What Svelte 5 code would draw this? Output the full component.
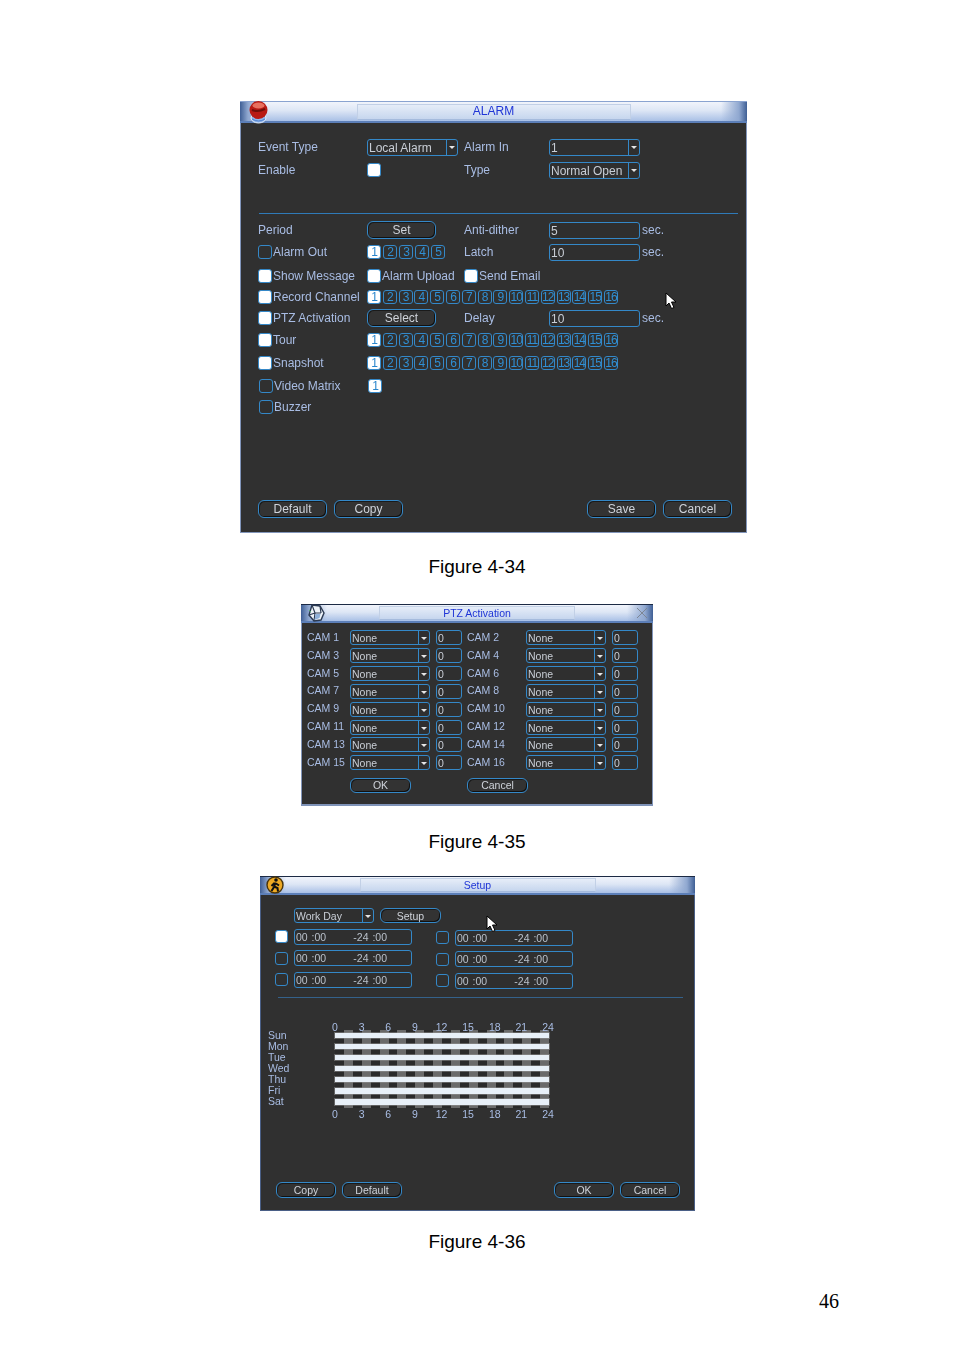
<script>
  const upTo = (n) => Array.from({ length: n }, (_, i) => i + 1)
  const camRows = upTo(8).map((i) => [i * 2 - 1, i * 2])
  const hours = [0, 3, 6, 9, 12, 15, 18, 21, 24]
  const days = ['Sun', 'Mon', 'Tue', 'Wed', 'Thu', 'Fri', 'Sat']
</script>

{#snippet title(text)}
  <div class="plate">{text}</div>
{/snippet}

{#snippet select(text)}
  <div class="field select"><span class="val">{text}</span><span class="drop"></span></div>
{/snippet}

{#snippet check(text, on = false)}
  <div class="check-wrap">
    <span class="box" class:on></span>{#if text}<span>{text}</span>{/if}
  </div>
{/snippet}

{#snippet chips(n, wide = false)}
  <div class="chips" class:wide>
    {#each upTo(n) as i}
      <span class="chip" class:on={i === 1}>{i}</span>
    {/each}
  </div>
{/snippet}

{#snippet time()}
  <div class="field time"><span>00 :00</span><span>-24 :00</span></div>
{/snippet}

{#snippet cursor()}
  <svg class="cursor" width="12" height="18" viewBox="0 0 12 18">
    <path d="M1 1v13l3-3 2.500 5.500 2.500-1L6.500 10H11z" fill="#fff" stroke="#000" stroke-width="1" />
  </svg>
{/snippet}

<div class="page">
  <section class="dialog alarm">
    <header class="titlebar">
      <svg class="icon ball" width="22" height="24" viewBox="0 0 22 24">
        <ellipse cx="10.500" cy="17" rx="7.500" ry="5" fill="#8fb6ec" stroke="#e6effb" />
        <path d="M4 18q6.500 4 13 0" fill="none" stroke="#4f80cc" />
        <circle cx="10.500" cy="9" r="9" fill="#b81a14" />
        <ellipse cx="10.500" cy="4.500" rx="6" ry="3" fill="#e8705f" />
        <path d="M4 9q6 2.500 13-1" fill="none" stroke="#6e0f0a" stroke-width="2" />
      </svg>
      {@render title('ALARM')}
    </header>
    <div class="alarm-body">
      <div class="row">
        <span>Event Type</span>
        {@render select('Local Alarm')}
        <span>Alarm In</span>
        {@render select('1')}
      </div>
      <div class="row step3">
        <span>Enable</span>
        {@render check('', true)}
        <span>Type</span>
        {@render select('Normal Open')}
      </div>
      <div class="rule"></div>
      <div class="row">
        <span>Period</span>
        <button class="btn">Set</button>
        <span>Anti-dither</span>
        <div class="field"><span class="val">5</span></div>
        <span class="unit">sec.</span>
      </div>
      <div class="row step2">
        {@render check('Alarm Out')}
        {@render chips(5)}
        <span>Latch</span>
        <div class="field"><span class="val">10</span></div>
        <span class="unit">sec.</span>
      </div>
      <div class="row step4">
        {@render check('Show Message', true)}
        {@render check('Alarm Upload', true)}
        {@render check('Send Email', true)}
      </div>
      <div class="row step1">
        {@render check('Record Channel', true)}
        {@render chips(16, true)}
      </div>
      <div class="row step1">
        {@render check('PTZ Activation', true)}
        <button class="btn">Select</button>
        <span>Delay</span>
        <div class="field"><span class="val">10</span></div>
        <span class="unit">sec.</span>
      </div>
      <div class="row step2">
        {@render check('Tour', true)}
        {@render chips(16, true)}
      </div>
      <div class="row step3">
        {@render check('Snapshot', true)}
        {@render chips(16, true)}
      </div>
      <div class="row step3 nudge">
        {@render check('Video Matrix')}
        {@render chips(1)}
      </div>
      <div class="row step1 nudge">
        {@render check('Buzzer')}
      </div>
      <div class="actions">
        <button class="btn">Default</button>
        <button class="btn">Copy</button>
        <button class="btn push">Save</button>
        <button class="btn">Cancel</button>
      </div>
    </div>
    {@render cursor()}
  </section>
  <p class="caption">Figure 4-34</p>

  <section class="dialog ptz">
    <header class="titlebar small">
      <svg class="icon globe" width="20" height="18" viewBox="0 0 20 18">
        <path d="M6 1l8 1 4 7-3 7-7 1-5-6z" fill="#eef3f8" stroke="#2c3a52" stroke-width="1.400" />
        <path d="M6 1l3 8 6 0M9 9l-1 8M9 9l-6 2M14 2l1 7" fill="none" stroke="#2c3a52" stroke-width="1.200" />
        <path d="M9.500 10l5 0-1 4-5 2z" fill="#8fb0d8" />
        <path d="M3 6l2 2" stroke="#58b070" />
      </svg>
      {@render title('PTZ Activation')}
      <svg class="icon close" width="12" height="12" viewBox="0 0 12 12">
        <path d="M1 1l10 10M11 1L1 11" stroke="#7d8694" fill="none" />
      </svg>
    </header>
    <div class="ptz-body">
      {#each camRows as [a, b]}
        <div class="cam-row">
          <span>CAM {a}</span>
          {@render select('None')}
          <div class="field"><span class="val">0</span></div>
          <span>CAM {b}</span>
          {@render select('None')}
          <div class="field"><span class="val">0</span></div>
        </div>
      {/each}
      <div class="cam-actions">
        <button class="btn">OK</button>
        <button class="btn">Cancel</button>
      </div>
    </div>
  </section>
  <p class="caption second">Figure 4-35</p>

  <section class="dialog setup">
    <header class="titlebar small">
      <svg class="icon walker" width="18" height="18" viewBox="0 0 18 18">
        <circle cx="9" cy="9" r="8" fill="#eeaa24" stroke="#4a3408" stroke-width="1.400" />
        <circle cx="10" cy="4" r="1.800" fill="#111" />
        <path d="M9.500 6.500L8 11l-2.500 4M8 10.500l3.500 1.500.5 3.500M8.500 7L5.500 10M10 7.500l3 2" fill="none" stroke="#111" stroke-width="2" />
      </svg>
      {@render title('Setup')}
    </header>
    <div class="setup-body">
      <div class="setup-top">
        <div class="narrow">{@render select('Work Day')}</div>
        <button class="btn">Setup</button>
      </div>
      <div class="periods">
        {@render check('', true)}
        {@render time()}
        {@render check('')}
        {@render time()}
        {@render check('')}
        {@render time()}
        {@render check('')}
        {@render time()}
        {@render check('')}
        {@render time()}
        {@render check('')}
        {@render time()}
      </div>
      <div class="rule setup-rule"></div>
      <div class="chart">
        <div class="days">
          {#each days as d}<span>{d}</span>{/each}
        </div>
        <div class="plot">
          <div class="hours top">{#each hours as h}<span>{h}</span>{/each}</div>
          <div class="bars">{#each days as d}<i></i>{/each}</div>
          <div class="hours">{#each hours as h}<span>{h}</span>{/each}</div>
        </div>
      </div>
      <div class="setup-actions">
        <button class="btn">Copy</button>
        <button class="btn">Default</button>
        <button class="btn push">OK</button>
        <button class="btn">Cancel</button>
      </div>
    </div>
    {@render cursor()}
  </section>
  <p class="caption third">Figure 4-36</p>

  <footer class="folio">46</footer>
</div>

<style>
  :global(body) {
    background: #fff;
  }

  .page {
    width: 954px;
    height: 1350px;
    padding-top: 101px;
    box-sizing: border-box;
    overflow: hidden;
    font-family: 'Liberation Sans', Arial, sans-serif;
  }

  .caption {
    margin: 23px 0 26px;
    width: 954px;
    text-align: center;
    font-size: 19px;
    line-height: 22px;
    color: #000;
  }

  .caption.second {
    margin: 25px 0 23px;
  }

  .caption.third {
    margin: 20px 0 0;
  }

  .folio {
    margin: 37px 115px 0 0;
    text-align: right;
    font-family: 'Liberation Serif', 'Times New Roman', serif;
    font-size: 20px;
    line-height: 22px;
    color: #000;
  }

  .dialog {
    position: relative;
    box-sizing: border-box;
    background: #303030;
    border: 1px solid #8296bb;
    border-top: 0;
    color: #a9bde4;
    font-size: 12px;
    filter: blur(0.3px);
  }

  .alarm {
    width: 507px;
    height: 432px;
    margin-left: 240px;
  }

  .ptz {
    width: 352px;
    height: 202px;
    margin-left: 301px;
    border-bottom: 2px solid #7f93b8;
    font-size: 10.500px;
  }

  .setup {
    width: 435px;
    height: 335px;
    margin-left: 260px;
    border-color: #4a5f86;
    font-size: 10.500px;
  }

  .titlebar {
    position: relative;
    height: 22px;
    margin: 0 -1px;
    display: flex;
    align-items: center;
    justify-content: center;
    box-sizing: border-box;
    border-top: 1px solid #8aa3d0;
    border-bottom: 2px solid #5c7fb8;
    background:
      linear-gradient(90deg, #3f5f95 0, #90a8d0 8px, rgba(255, 255, 255, 0) 26px, rgba(255, 255, 255, 0) calc(100% - 26px), #90a8d0 calc(100% - 8px), #3f5f95 100%),
      linear-gradient(180deg, #f1f4fb 0, #dde6f5 45%, #a9c0e6 100%);
  }

  .titlebar.small {
    height: 19px;
    border-top-color: #1c2a44;
  }

  .plate {
    box-sizing: border-box;
    width: 274px;
    height: 16px;
    line-height: 13px;
    text-align: center;
    border: 1px solid #c2d0e6;
    border-bottom-color: #a5bbdd;
    background: linear-gradient(180deg, #e6edf8, #c6d6ee);
    color: #1f35d6;
    font-size: 12px;
  }

  .small .plate {
    width: 196px;
    height: 14px;
    line-height: 12px;
    font-size: 10.500px;
  }

  .setup .plate {
    width: 236px;
  }

  .icon {
    position: absolute;
  }

  .ball {
    left: 8px;
    top: -1px;
  }

  .globe {
    left: 5px;
    top: -1px;
  }

  .close {
    right: 5px;
    top: 2px;
  }

  .walker {
    left: 6px;
    top: -1px;
  }

  .cursor {
    position: absolute;
  }

  .alarm .cursor {
    left: 424px;
    top: 191px;
  }

  .setup .cursor {
    left: 225px;
    top: 39px;
  }

  .alarm-body {
    padding: 14px 8px 0 17px;
  }

  .row {
    display: grid;
    grid-template-columns: 109px 97px 85px 92px auto;
    align-items: center;
    height: 20px;
  }

  .row.step1 {
    margin-top: 1px;
  }

  .row.step2 {
    margin-top: 2px;
  }

  .row.step3 {
    margin-top: 3px;
  }

  .row.step4 {
    margin-top: 4px;
  }

  .row.nudge {
    padding-left: 1px;
  }

  .rule {
    height: 1px;
    margin: 33px 0 6px 1px;
    background: #2f7ab8;
  }

  .field {
    position: relative;
    box-sizing: border-box;
    display: flex;
    align-items: center;
    height: 17px;
    border: 1px solid #3488c8;
    border-radius: 3px;
    color: #c9ced6;
    background: #2f2f2f;
  }

  .row .field {
    width: 91px;
  }

  .val {
    flex: 1;
    padding: 1px 0 0 1px;
    white-space: nowrap;
    overflow: hidden;
  }

  .drop {
    position: relative;
    flex: none;
    width: 10px;
    height: 100%;
    border-left: 1px solid #3488c8;
  }

  .drop::after {
    content: '';
    position: absolute;
    left: 2px;
    top: 6px;
    border: 3px solid transparent;
    border-top: 3px solid #e6e6e6;
    border-bottom: 0;
  }

  .unit {
    padding-left: 1px;
  }

  .check-wrap {
    display: flex;
    align-items: center;
    gap: 1px;
    white-space: nowrap;
  }

  .box {
    flex: none;
    box-sizing: border-box;
    width: 14px;
    height: 14px;
    border: 1px solid #3488c8;
    border-radius: 3px;
  }

  .box.on {
    background: #fff;
  }

  .chips {
    display: flex;
    gap: 2px;
  }

  .chips.wide {
    grid-column: 2 / -1;
    gap: 1.800px;
  }

  .chip {
    box-sizing: border-box;
    width: 14px;
    height: 14px;
    line-height: 12px;
    text-align: center;
    border: 1px solid #3488c8;
    border-radius: 3px;
    color: #2f8fd4;
    font-size: 12px;
    letter-spacing: -1px;
    overflow: hidden;
  }

  .chip.on {
    background: #fff;
    color: #2a86cc;
  }

  .btn {
    box-sizing: border-box;
    width: 69px;
    height: 18px;
    padding: 0;
    border: 1px solid #3488c8;
    border-radius: 6px;
    background: #333;
    box-shadow: inset 1px 1px 0 #1a1a1a, inset -1px -1px 0 #111;
    color: #cfd3da;
    font: inherit;
    line-height: 14px;
  }

  .actions {
    display: flex;
    gap: 7px;
    margin-top: 83px;
    padding: 0 6px 0 0;
  }

  .push {
    margin-left: auto;
  }

  .ptz-body {
    padding: 6px 0 0 5px;
  }

  .cam-row {
    display: grid;
    grid-template-columns: 43px 86px 31px 59px 86px 26px;
    align-items: center;
    height: 17.850px;
  }

  .cam-row .field {
    height: 15px;
    width: 80px;
  }

  .cam-row .field:not(.select) {
    width: 26px;
  }

  .cam-row > span {
    position: relative;
    top: -1px;
  }

  .cam-actions {
    display: grid;
    grid-template-columns: 117px 61px;
    margin: 6px 0 0 43px;
  }

  .cam-actions .btn {
    width: 61px;
    height: 15px;
    line-height: 12px;
  }

  .setup-body {
    padding: 13px 14px 0 14px;
  }

  .setup-top {
    display: flex;
    gap: 6px;
    padding-left: 19px;
  }

  .narrow {
    width: 80px;
  }

  .narrow .field {
    height: 15px;
  }

  .setup-top .btn {
    width: 61px;
    height: 15px;
    line-height: 12px;
  }

  .periods {
    display: grid;
    grid-template-columns: 19px 142px 19px 118px;
    grid-auto-rows: 21.500px;
    align-items: center;
    margin-top: 3px;
  }

  .periods > :global(:nth-child(4n + 3)),
  .periods > :global(:nth-child(4n + 4)) {
    margin-top: 2px;
  }

  .periods .box {
    width: 13px;
    height: 13px;
  }

  .time {
    width: 118px;
    height: 16px;
    justify-content: space-between;
    padding: 0 24px 0 1px;
    color: #b9c0ca;
    word-spacing: 1px;
  }

  .setup-rule {
    margin: 6px -3px 0 3px;
    background: #34618a;
  }

  .chart {
    display: flex;
    margin-top: 23px;
  }

  .days {
    display: flex;
    flex-direction: column;
    width: 67px;
    margin: 9px 0 0 -7px;
    line-height: 11.100px;
  }

  .days span {
    height: 11.100px;
  }

  .plot {
    width: 214px;
  }

  .hours {
    display: flex;
    justify-content: space-between;
    height: 12px;
    line-height: 12px;
    margin: 0 -2.500px 0 -3.500px;
  }

  .hours.top {
    margin-bottom: -3px;
  }

  .hours span {
    display: flex;
    justify-content: center;
    width: 7px;
  }

  .bars {
    display: flex;
    flex-direction: column;
    gap: 5.100px;
    padding: 3px 0;
    height: 78px;
    box-sizing: border-box;
    background:
      repeating-linear-gradient(90deg, #2a2a2a 0, #2a2a2a 8.920px, #6a6a6a 8.920px, #6a6a6a 17.840px);
  }

  .bars i {
    display: block;
    height: 6px;
    background: #e8f0f8;
    box-shadow: 0 0 0 1px rgba(150, 150, 150, 0.5);
  }

  .setup-actions {
    display: flex;
    gap: 6px;
    margin-top: 62px;
    padding-left: 1px;
  }

  .setup-actions .btn {
    width: 60px;
    height: 16px;
    line-height: 12px;
  }
</style>
